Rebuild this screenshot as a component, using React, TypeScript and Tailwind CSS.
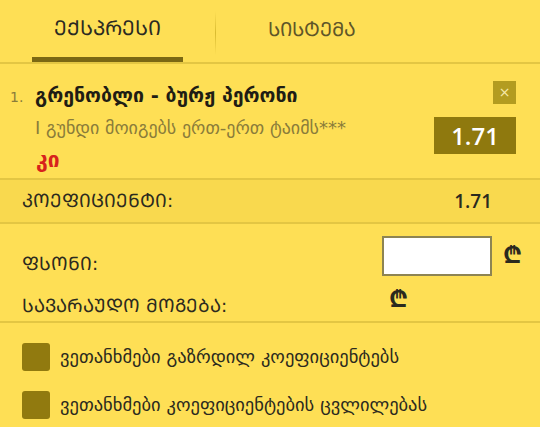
import React from "react";

const F = { fontFamily: '"DejaVu Sans", "Noto Sans", sans-serif' };
const OS = { fontFamily: '"Open Sans", sans-serif' };
const LARI = { fontFamily: '"Noto Sans", "Open Sans", "DejaVu Sans", sans-serif' };

export default function App() {
  return (
    <div className="w-[540px] h-[427px] bg-[#fedf55] overflow-hidden text-[#2b2a1e]" style={F}>
      {/* Tabs */}
      <div className="flex h-[64px] border-b-2 border-[#e3c643]">
        <div className="w-[215px] flex flex-col">
          <div className="h-[59px] flex items-center justify-center text-[20.5px] font-medium text-[#2b2a22]">ᲔᲥᲡᲞᲠᲔᲡᲘ</div>
          <div className="ml-[32px] w-[151px] h-[5px] bg-[#7b6813]" />
        </div>
        <div className="w-[1px] h-[44px] mt-[11px] bg-gradient-to-b from-[#fedf55] via-[#d9bb2f] to-[#fedf55]" />
        <div className="flex-1 flex flex-col">
          <div className="h-[59px] flex items-center pl-[52px] text-[19.5px] text-[#5f5628]">ᲡᲘᲡᲢᲔᲛᲐ</div>
        </div>
      </div>
      {/* Event */}
      <div className="h-[116px] border-b-2 border-[#e3c643] flex pl-[10px] pr-[24px] pt-[17px]">
        <div className="flex-1">
          <div className="flex items-baseline">
            <span className="w-[25px] text-[14px] text-[#8a7c3a]">1.</span>
            <span className="text-[19.5px] font-bold text-[#1f1d14]">გრენობლი - ბურჟ პერონი</span>
          </div>
          <div className="pl-[25px] mt-[4px] text-[18px] text-[#8a7c3a]">I გუნდი მოიგებს ერთ-ერთ ტაიმს***</div>
          <div className="pl-[26px] mt-[4px] text-[21px] font-bold text-[#d7221c]">კი</div>
        </div>
        <div className="flex flex-col items-end">
          <div className="w-[23px] h-[23px] bg-[#b39c20] text-[#f6e9a8] flex items-center justify-center text-[14px]">×</div>
          <div className="mt-[13px] w-[82px] h-[37px] bg-[#8f790e] text-white text-[24px] font-semibold flex items-center justify-center" style={OS}>1.71</div>
        </div>
      </div>
      {/* Coefficient */}
      <div className="h-[44px] bg-[#f9d94e] border-b-2 border-[#e3c643] flex items-center justify-between pl-[22px] pr-[48px]">
        <span className="text-[18.5px]">ᲙᲝᲔᲤᲘᲪᲘᲔᲜᲢᲘ:</span>
        <span className="text-[19px] font-semibold" style={OS}>1.71</span>
      </div>
      {/* Stake */}
      <div className="h-[99px] border-b-2 border-[#e3c643] pl-[22px] pr-[18px]">
        <div className="flex h-[52px] pt-[12px]">
          <span className="flex-1 text-[18.5px] self-end -mb-[2px]">ᲤᲡᲝᲜᲘ:</span>
          <div className="w-[110px] h-[40px] bg-white border-2 border-[#8d8453]" />
          <span className="ml-[11px] text-[24px] font-bold leading-none mt-[6px]" style={LARI}>₾</span>
        </div>
        <div className="flex items-center mt-[16px]">
          <span className="w-[367px] text-[18.5px]">ᲡᲐᲕᲐᲠᲐᲣᲓᲝ ᲛᲝᲒᲔᲑᲐ:</span>
          <span className="text-[24px] font-bold leading-none -mt-[16px]" style={LARI}>₾</span>
        </div>
      </div>
      {/* Checkboxes */}
      <div className="pl-[22px] pt-[20px] flex flex-col gap-[20px]">
        <div className="flex items-center gap-[10px]">
          <div className="w-[28px] h-[28px] rounded-[3px] bg-[#917a0f]" />
          <span className="text-[18.5px]">ვეთანხმები გაზრდილ კოეფიციენტებს</span>
        </div>
        <div className="flex items-center gap-[10px]">
          <div className="w-[28px] h-[28px] rounded-[3px] bg-[#917a0f]" />
          <span className="text-[18.5px]">ვეთანხმები კოეფიციენტების ცვლილებას</span>
        </div>
      </div>
    </div>
  );
}
